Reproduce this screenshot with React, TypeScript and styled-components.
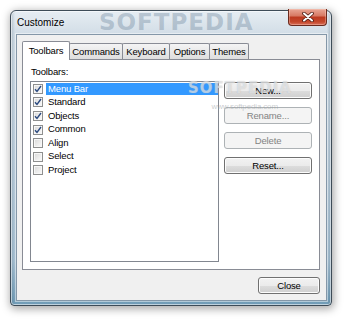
import styled, { createGlobalStyle } from "styled-components";

const GlobalStyle = createGlobalStyle`
  html, body {
    margin: 0;
    padding: 0;
    background: #ffffff;
  }
  body {
    font-family: "Liberation Sans", Arial, sans-serif;
    font-size: 9.5px;
    letter-spacing: -0.15px;
    color: #000000;
  }
`;

const tabs = [
  { label: "Toolbars", width: 48 },
  { label: "Commands", width: 54 },
  { label: "Keyboard", width: 48 },
  { label: "Options", width: 41 },
  { label: "Themes", width: 40 },
];

const toolbars = [
  { name: "Menu Bar", checked: true, selected: true },
  { name: "Standard", checked: true },
  { name: "Objects", checked: true },
  { name: "Common", checked: true },
  { name: "Align", checked: false },
  { name: "Select", checked: false },
  { name: "Project", checked: false },
];

const actions = [
  { label: "New...", disabled: false },
  { label: "Rename...", disabled: true },
  { label: "Delete", disabled: true },
  { label: "Reset...", disabled: false },
];

const Tick = () => (
  <svg width="8" height="8" viewBox="0 0 8 8">
    <path d="M1 4.2 L3 6.4 L7 1" fill="none" stroke="#2b4a80" strokeWidth="1.4" />
  </svg>
);

const CloseGlyph = () => (
  <svg width="12" height="10" viewBox="0 0 12 10">
    <path d="M2 1.5 L10 8.5 M10 1.5 L2 8.5" stroke="#4a1a12" strokeWidth="3.6" strokeLinecap="round" />
    <path d="M2 1.5 L10 8.5 M10 1.5 L2 8.5" stroke="#ffffff" strokeWidth="2" strokeLinecap="round" />
  </svg>
);

const App = () => {
  return (
    <Screen>
      <GlobalStyle />
      <Window>
        <TitleBar>
          <Title>Customize</Title>
          <TitleWatermark>SOFTPEDIA</TitleWatermark>
          <CloseButton>
            <CloseGlyph />
          </CloseButton>
        </TitleBar>
        <Client>
          <TabRow>
            {tabs.map((t, i) => (
              <Tab key={t.label} $active={i === 0} $width={t.width}>
                {t.label}
              </Tab>
            ))}
          </TabRow>
          <Panel>
            <Label>Toolbars:</Label>
            <PanelBody>
              <ListBox>
                {toolbars.map((item) => (
                  <Row key={item.name}>
                    <CheckBox>{item.checked && <Tick />}</CheckBox>
                    <ItemText $selected={!!item.selected}>{item.name}</ItemText>
                  </Row>
                ))}
              </ListBox>
              <ButtonColumn>
                {actions.map((a) => (
                  <Button key={a.label} disabled={a.disabled}>
                    {a.label}
                  </Button>
                ))}
              </ButtonColumn>
              <ContentWatermark>
                <BigMark>SOFTPEDIA</BigMark>
                <SmallMark>www.softpedia.com</SmallMark>
              </ContentWatermark>
            </PanelBody>
          </Panel>
          <Footer>
            <Button $wide>Close</Button>
          </Footer>
        </Client>
      </Window>
    </Screen>
  );
};

export default App;

const Screen = styled.div`
  width: 350px;
  height: 325px;
  padding: 10px 0 0 10px;
  box-sizing: border-box;
`;

const Window = styled.div`
  width: 322px;
  height: 296px;
  box-sizing: border-box;
  border: 1px solid #3e4c58;
  border-radius: 6px 6px 4px 4px;
  background:
    linear-gradient(90deg, rgba(60, 90, 110, 0.25) 0px, rgba(255, 255, 255, 0) 4px, rgba(255, 255, 255, 0) 316px, rgba(60, 90, 110, 0.3) 320px),
    linear-gradient(180deg, #e6edf3 0px, #d3dee7 22px, #c2d2df 45%, #a9c2d4 85%, #6f9bb6 100%);
  box-shadow: 1px 2px 8px 1px rgba(0, 0, 0, 0.35), inset 0 0 0 1px rgba(255, 255, 255, 0.55);
  display: flex;
  flex-direction: column;
`;

const TitleBar = styled.div`
  position: relative;
  height: 23px;
  padding-left: 6px;
  display: flex;
  align-items: center;
`;

const Title = styled.span`
  font-size: 10px;
  letter-spacing: 0;
  color: #000000;
  text-shadow: 0 0 6px rgba(255, 255, 255, 0.9);
  position: relative;
  z-index: 1;
`;

const TitleWatermark = styled.span`
  position: absolute;
  left: 88px;
  top: -2px;
  font-family: "DejaVu Sans", sans-serif;
  font-weight: bold;
  font-size: 23px;
  letter-spacing: 1px;
  color: rgba(110, 135, 158, 0.4);
`;

const CloseButton = styled.div`
  margin-left: auto;
  margin-right: 4px;
  align-self: flex-start;
  margin-top: -2px;
  width: 39px;
  height: 17px;
  box-sizing: border-box;
  border: 1px solid #6b2a1e;
  border-top: none;
  border-radius: 0 0 4px 4px;
  background: linear-gradient(180deg, #e9a695 0%, #d77a64 42%, #bd3a20 52%, #c4482c 80%, #d9705a 100%);
  box-shadow: inset 0 0 0 1px rgba(255, 220, 210, 0.35);
  display: flex;
  align-items: center;
  justify-content: center;
`;

const Client = styled.div`
  flex: 1;
  margin: 0 4px 4px 5px;
  box-sizing: border-box;
  border: 1px solid #8497a8;
  box-shadow: 0 0 0 1px rgba(255, 255, 255, 0.45);
  background: #f0f0f0;
  padding: 6px 6px 6px 5px;
  display: flex;
  flex-direction: column;
`;

const TabRow = styled.div`
  height: 18px;
  display: flex;
  align-items: flex-end;
`;

const Tab = styled.div<{ $active: boolean; $width: number }>`
  position: relative;
  z-index: ${(p) => (p.$active ? 1 : 0)};
  width: ${(p) => p.$width}px;
  height: ${(p) => (p.$active ? 19 : 16)}px;
  margin-bottom: ${(p) => (p.$active ? -1 : 0)}px;
  margin-right: -1px;
  box-sizing: border-box;
  border: 1px solid #898c95;
  border-bottom: none;
  border-radius: 2px 2px 0 0;
  background: ${(p) => (p.$active ? "#ffffff" : "linear-gradient(180deg, #f4f4f4 0%, #e9e9e9 50%, #dedede 100%)")};
  display: flex;
  align-items: center;
  justify-content: center;
  padding-bottom: ${(p) => (p.$active ? 2 : 0)}px;
  white-space: nowrap;
`;

const Panel = styled.div`
  flex: 1;
  box-sizing: border-box;
  border: 1px solid #898c95;
  background: #ffffff;
  padding: 6px 7px 7px 7px;
  display: flex;
  flex-direction: column;
`;

const Label = styled.div`
  height: 11px;
  line-height: 11px;
  padding-left: 1px;
  margin-bottom: 4px;
`;

const PanelBody = styled.div`
  position: relative;
  display: flex;
  align-items: flex-start;
  gap: 5px;
  flex: 1;
`;

const ListBox = styled.div`
  width: 192px;
  height: 181px;
  box-sizing: border-box;
  border: 1px solid #828790;
  background: #ffffff;
  display: flex;
  flex-direction: column;
`;

const Row = styled.div`
  height: 13.6px;
  padding-left: 2px;
  display: flex;
  align-items: center;
`;

const CheckBox = styled.div`
  width: 10px;
  height: 10px;
  box-sizing: border-box;
  border: 1px solid #8e8f8f;
  background: linear-gradient(135deg, #d8d8d8 0%, #eeeeee 60%, #fbfbfb 100%);
  box-shadow: inset 0 0 0 1px #f7f7f7;
  margin-right: 3px;
  display: flex;
  align-items: center;
  justify-content: center;
`;

const ItemText = styled.span<{ $selected: boolean }>`
  flex: 1;
  height: 12.6px;
  line-height: 12.6px;
  padding-left: 2px;
  background: ${(p) => (p.$selected ? "#3399ff" : "transparent")};
  color: ${(p) => (p.$selected ? "#ffffff" : "#000000")};
`;

const ButtonColumn = styled.div`
  margin-top: 1px;
  display: flex;
  flex-direction: column;
  gap: 8px;
`;

const Button = styled.div<{ disabled?: boolean; $wide?: boolean }>`
  width: ${(p) => (p.$wide ? 62 : 88)}px;
  height: 17px;
  box-sizing: border-box;
  border: 1px solid ${(p) => (p.disabled ? "#adb2b5" : "#707070")};
  border-radius: 3px;
  background: ${(p) =>
    p.disabled
      ? "#f4f4f4"
      : "linear-gradient(180deg, #f2f2f2 0%, #ebebeb 50%, #dddddd 51%, #cfcfcf 100%)"};
  box-shadow: ${(p) => (p.disabled ? "none" : "inset 0 0 0 1px #fcfcfc")};
  color: ${(p) => (p.disabled ? "#838383" : "#000000")};
  display: flex;
  align-items: center;
  justify-content: center;
`;

const ContentWatermark = styled.div`
  position: absolute;
  left: 158px;
  top: -1px;
  display: flex;
  flex-direction: column;
  align-items: flex-end;
  pointer-events: none;
`;

const BigMark = styled.span`
  font-family: "DejaVu Sans", sans-serif;
  font-weight: bold;
  font-size: 15px;
  line-height: 17px;
  letter-spacing: 1px;
  color: rgba(255, 255, 255, 0.5);
  text-shadow: 0 0 1px rgba(150, 155, 160, 0.6);
`;

const SmallMark = styled.span`
  margin-top: 5px;
  margin-right: 14px;
  font-size: 8px;
  line-height: 9px;
  color: rgba(150, 155, 160, 0.5);
`;

const Footer = styled.div`
  margin-top: 7px;
  display: flex;
  justify-content: flex-end;
`;
